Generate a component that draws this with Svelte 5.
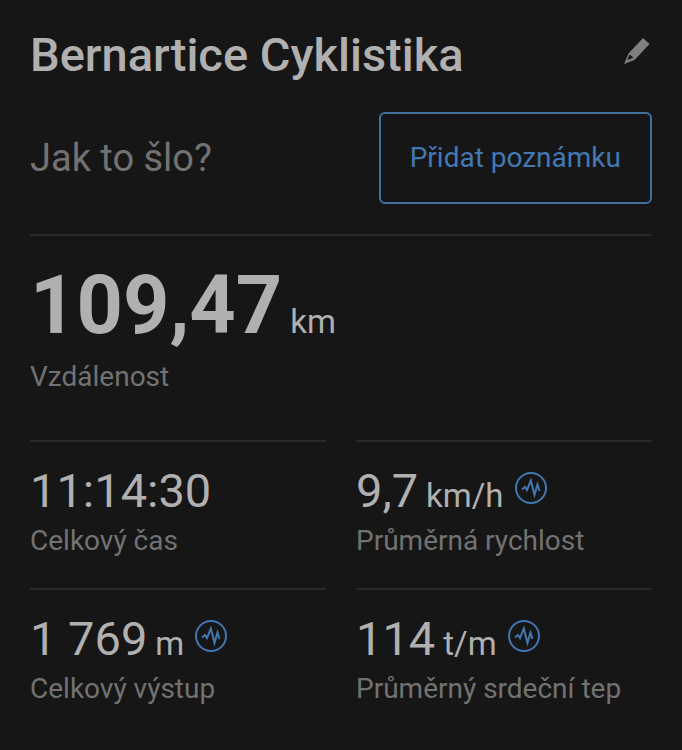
<script>
	let title = "Bernartice Cyklistika";

	let stats = [
		{ value: "11:14:30", unit: "", label: "Celkový čas", chart: false },
		{ value: "9,7", unit: "km/h", label: "Průměrná rychlost", chart: true },
		{ value: "1 769", unit: "m", label: "Celkový výstup", chart: true },
		{ value: "114", unit: "t/m", label: "Průměrný srdeční tep", chart: true },
	];
</script>

<main class="activity">
	<header class="title-row">
		<h1>{title}</h1>
		<button type="button" class="icon-btn" aria-label="Upravit název">
			<svg width="30" height="30" viewBox="0 0 30 30">
				<path
					fill="currentColor"
					fill-rule="evenodd"
					d="M21 2 27.5 8 12.5 24 2 28 6.5 17.5ZM7.5 18.5 5.5 24 11.5 21.5Z"
				/>
			</svg>
		</button>
	</header>

	<section class="note-row">
		<p>Jak to šlo?</p>
		<button type="button" class="note-btn">Přidat poznámku</button>
	</section>

	<section class="distance">
		<div class="distance-value">
			<strong>109,47</strong>
			<span class="unit">km</span>
		</div>
		<div class="label">Vzdálenost</div>
	</section>

	<section class="stats">
		{#each stats as stat}
			<div class="stat">
				<div class="stat-value">
					<span class="number">{stat.value}</span>
					{#if stat.unit}
						<span class="unit">{stat.unit}</span>
					{/if}
					{#if stat.chart}
						<button type="button" class="chart-btn" aria-label="Zobrazit graf: {stat.label}">
							<svg width="34" height="34" viewBox="0 0 34 34" fill="none" stroke="currentColor">
								<circle cx="17" cy="17" r="15" stroke-width="2" />
								<path
									d="M8 18.5 11 16 13 19 16.8 9.5 20.5 24 23.5 13.5 25.5 20"
									stroke-width="2"
									stroke-linejoin="miter"
								/>
							</svg>
						</button>
					{/if}
				</div>
				<div class="label">{stat.label}</div>
			</div>
		{/each}
	</section>
</main>

<style>
:global(body) {
	margin: 0;
	background: #161616;
}

.activity {
	box-sizing: border-box;
	min-height: 100vh;
	padding: 25px 30px;
	background: #161616;
	color: #b0b0b0;
	font-family: Roboto, sans-serif;
}

button {
	background: none;
	border: none;
	padding: 0;
	font-family: inherit;
	cursor: pointer;
}

svg {
	display: block;
}

.title-row {
	display: flex;
	justify-content: space-between;
	align-items: flex-start;
	margin-bottom: 27px;
}

h1 {
	margin: 0;
	font-size: 47px;
	line-height: 60px;
	font-weight: 500;
}

.icon-btn {
	padding-top: 11px;
	color: #808080;
}

.note-row {
	display: flex;
	justify-content: space-between;
	align-items: center;
	padding-bottom: 30px;
	border-bottom: 2px solid #292929;
}

.note-row p {
	margin: 0;
	font-size: 38px;
	line-height: 48px;
	color: #727272;
}

.note-btn {
	padding: 27px 29px;
	border: 2px solid #42719f;
	border-radius: 6px;
	color: #4478b4;
	font-size: 28px;
	line-height: 34px;
}

.distance {
	padding: 26px 0 46px;
}

.distance-value {
	display: flex;
	align-items: baseline;
	gap: 8px;
}

.distance-value strong {
	font-size: 81px;
	line-height: 88px;
	font-weight: 700;
}

.unit {
	font-size: 33px;
}

.label {
	font-size: 28px;
	line-height: 34px;
	color: #727272;
}

.distance .label {
	margin-top: 10px;
}

.stats {
	display: grid;
	grid-template-columns: 1fr 1fr;
	column-gap: 30px;
}

.stat {
	padding: 21px 0 30px;
	border-top: 2px solid #292929;
}

.stat-value {
	display: flex;
	align-items: baseline;
	gap: 8px;
	margin-bottom: 5px;
}

.number {
	font-size: 47px;
	line-height: 56px;
}

.chart-btn {
	align-self: flex-start;
	padding-top: 8px;
	margin-left: 2px;
	color: #4278b0;
}
</style>
